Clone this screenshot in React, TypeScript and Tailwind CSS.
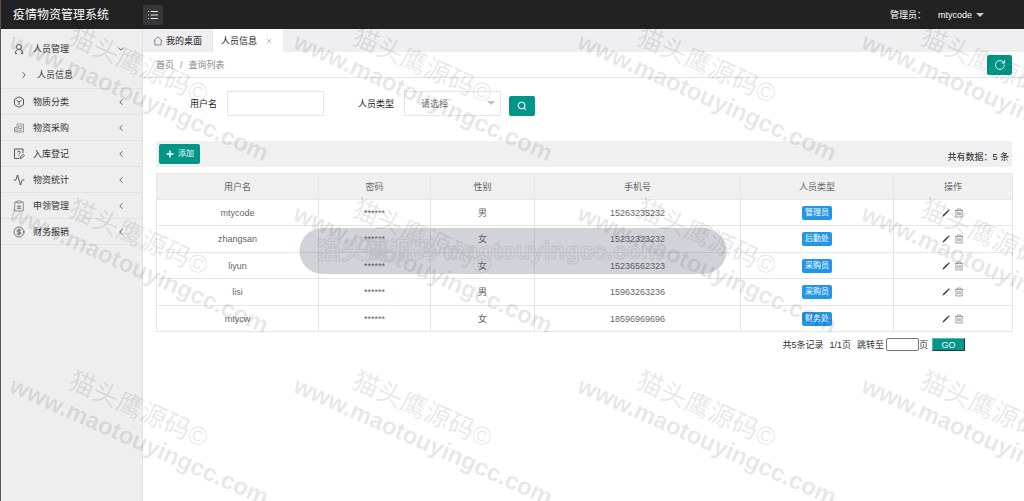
import { useState } from "react";
import type { ReactNode } from "react";
import {
  Activity,
  ChevronDown,
  ChevronLeft,
  ChevronRight,
  CircleDollarSign,
  List,
  Plus,
  RotateCw,
  Search,
  X,
} from "lucide-react";

type Person = {
  name: string;
  password: string;
  gender: string;
  phone: string;
  role: string;
};

const people: Person[] = [
  { name: "mtycode", password: "******", gender: "男", phone: "15263235232", role: "管理员" },
  { name: "zhangsan", password: "******", gender: "女", phone: "15232323232", role: "后勤处" },
  { name: "liyun", password: "******", gender: "女", phone: "15236562323", role: "采购员" },
  { name: "lisi", password: "******", gender: "男", phone: "15963263236", role: "采购员" },
  { name: "mtycw", password: "******", gender: "女", phone: "18596969696", role: "财务处" },
];

const columns = [
  { title: "用户名", width: "w-[162px]" },
  { title: "密码", width: "w-[112px]" },
  { title: "性别", width: "w-[104px]" },
  { title: "手机号", width: "w-[206px]" },
  { title: "人员类型", width: "w-[153px]" },
  { title: "操作", width: "w-[119px]" },
];

function Icon({ children }: { children: ReactNode }) {
  return (
    <svg
      viewBox="0 0 24 24"
      className="size-3"
      fill="none"
      stroke="currentColor"
      strokeWidth="1.6"
      aria-hidden="true"
    >
      {children}
    </svg>
  );
}

function UserIcon() {
  return (
    <Icon>
      <circle cx="12" cy="8" r="5" />
      <path d="M9.500 12.500C6.500 14 5 17 4.500 21H8M14.500 12.500c3 1.500 4.500 4.500 5 8.500H16" />
    </Icon>
  );
}

function BoxIcon() {
  return (
    <Icon>
      <path d="M12 1.500l9 5v11l-9 5-9-5v-11z" />
      <path d="M7 8.500l5 3.500 5-3.500M12 12v6" />
    </Icon>
  );
}

function PurchaseIcon() {
  return (
    <Icon>
      <path d="M8 4h13v16H3v-9h5z" stroke="#888" />
      <path d="M8 11v9M11 8h7v5h-7zM11 16.500h7M5.500 14v4" stroke="#888" />
    </Icon>
  );
}

function RegisterIcon() {
  return (
    <Icon>
      <path d="M20 10V2H3v19h9" />
      <path d="M9 8.500c0-3.500 5.500-3 5.500 0 0 2-2.800 2-2.800 4.500M11.700 15v1.500M14 21l1-3.500 5-5 2.500 2.500-5 5z" />
    </Icon>
  );
}

function ApplyIcon() {
  return (
    <Icon>
      <path d="M8 4H3.500v18h17V4H16" stroke="#777" />
      <path d="M8 2h8v4H8zM9 10l3 3 3-3M7.500 13.500h9M7.500 17h9M12 13v6" stroke="#777" />
    </Icon>
  );
}

function PencilIcon() {
  return (
    <svg viewBox="0 0 16 16" className="size-2" fill="#333" aria-hidden="true">
      <path d="M13.500 0.500l2 2-1.800 1.800-2-2zM11 3l2 2L4.500 13.500 0.500 15.500 2.500 11.500z" />
    </svg>
  );
}

function TrashIcon() {
  return (
    <Icon>
      <path
        d="M2 6h20M7.500 6V2.500h9V6M4.500 6v15.500h15V6M9 10v7.500M12 10v7.500M15 10v7.500"
        stroke="#777"
      />
    </Icon>
  );
}

function HomeIcon() {
  return (
    <Icon>
      <path d="M1.500 12L12 2l10.500 10M4.500 10v11.500h15V10" stroke="#555" />
    </Icon>
  );
}

const menu = [
  { label: "物质分类", icon: <BoxIcon /> },
  { label: "物资采购", icon: <PurchaseIcon /> },
  { label: "入库登记", icon: <RegisterIcon /> },
  { label: "物资统计", icon: <Activity className="size-3" strokeWidth={1.6} /> },
  { label: "申领管理", icon: <ApplyIcon /> },
  { label: "财务报销", icon: <CircleDollarSign className="size-3" strokeWidth={1.3} /> },
];

function Header() {
  return (
    <header className="flex h-[29px] shrink-0 items-center bg-[#222] text-white">
      <h1 className="w-[142px] pl-3 text-[12px] leading-4">疫情物资管理系统</h1>
      <button
        aria-label="菜单"
        className="flex size-5 items-center justify-center rounded-xs bg-[#383838] text-gray-200"
      >
        <List className="size-3" strokeWidth={2} />
      </button>
      <div className="ml-auto flex items-center pr-10">
        <span>管理员：</span>
        <button className="ml-3 flex items-center gap-1">
          mtycode
          <svg viewBox="0 0 8 4" className="h-1 w-2" fill="#ccc" aria-hidden="true">
            <path d="M0 0h8L4 4z" />
          </svg>
        </button>
      </div>
    </header>
  );
}

function Sidebar() {
  return (
    <nav className="w-[142px] shrink-0 border-r border-[#e2e2e2] bg-[#eee] pt-[7px] text-[#333]">
      <a href="#people" className="flex h-[26px] items-center pr-4 pl-3">
        <UserIcon />
        <span className="ml-2">人员管理</span>
        <ChevronDown className="ml-auto size-2.5" strokeWidth={1.8} />
      </a>
      <a
        href="#people-info"
        className="flex h-[27px] items-center border-b border-[#e2e2e2] pl-[18px]"
      >
        <ChevronRight className="size-2.5" strokeWidth={1.8} />
        <span className="ml-2">人员信息</span>
      </a>
      {menu.map((item) => (
        <a
          key={item.label}
          href="#menu"
          className="flex h-[26px] items-center border-b border-[#e2e2e2] pr-4 pl-3"
        >
          {item.icon}
          <span className="ml-2">{item.label}</span>
          <ChevronLeft className="ml-auto size-2.5" strokeWidth={1.8} />
        </a>
      ))}
    </nav>
  );
}

function Tabs() {
  return (
    <div className="flex h-[23px] bg-[#efeef0] text-[#222]">
      <button className="flex items-center gap-[3px] border-r border-[#e2e2e2] px-2.5 [&>svg]:size-2.5">
        <HomeIcon />
        我的桌面
      </button>
      <button className="flex items-center gap-2 bg-white pr-2.5 pl-2">
        人员信息
        <X className="size-2 text-gray-400" strokeWidth={2} />
      </button>
    </div>
  );
}

function SearchForm() {
  const [name, setName] = useState("");

  return (
    <form
      className="flex items-center pt-[13px] pl-[34px] text-[#222]"
      onSubmit={(e) => e.preventDefault()}
    >
      <label htmlFor="username">用户名</label>
      <input
        id="username"
        value={name}
        onChange={(e) => setName(e.target.value)}
        className="ml-2.5 h-[25px] w-[97px] border border-[#e6e6e6] bg-white px-2"
      />
      <label htmlFor="role" className="ml-[34px]">
        人员类型
      </label>
      <div className="relative ml-2.5">
        <select
          id="role"
          className="block h-[25px] w-[97px] appearance-none border border-[#e6e6e6] bg-white pl-4 text-[#757575]"
        >
          <option>请选择</option>
          <option>管理员</option>
          <option>后勤处</option>
          <option>采购员</option>
          <option>财务处</option>
        </select>
        <svg
          viewBox="0 0 8 4"
          className="pointer-events-none absolute top-2.5 right-1.5 h-1 w-2"
          fill="#c2c2c2"
          aria-hidden="true"
        >
          <path d="M0 0h8L4 4z" />
        </svg>
      </div>
      <button
        aria-label="搜索"
        className="ml-2 flex h-5 w-[26px] items-center justify-center self-end rounded-xs bg-[#009688] text-white"
      >
        <Search className="size-2.5" strokeWidth={2.5} />
      </button>
    </form>
  );
}

function PeopleTable() {
  return (
    <table className="mt-1.5 w-full table-fixed border-collapse text-center text-[#666]">
      <thead>
        <tr className="h-[26px] bg-[#f0f0f0]">
          {columns.map((col) => (
            <th
              key={col.title}
              className={`border border-[#e6e6e6] p-0 font-normal ${col.width}`}
            >
              {col.title}
            </th>
          ))}
        </tr>
      </thead>
      <tbody>
        {people.map((p) => (
          <tr key={p.name} className="h-[26px] *:border *:border-[#e6e6e6] *:p-0 even:h-[27px]">
            <td>{p.name}</td>
            <td>{p.password}</td>
            <td>{p.gender}</td>
            <td>{p.phone}</td>
            <td>
              <span className="inline-block rounded-xs bg-[#2496ea] px-[3px] text-[8px] leading-[14px] text-white">
                {p.role}
              </span>
            </td>
            <td>
              <div className="flex items-center justify-center gap-1">
                <button aria-label="编辑">
                  <PencilIcon />
                </button>
                <button aria-label="删除" className="[&>svg]:size-2.5">
                  <TrashIcon />
                </button>
              </div>
            </td>
          </tr>
        ))}
      </tbody>
    </table>
  );
}

function Pagination() {
  return (
    <div className="mt-1.5 flex items-center justify-end pr-[47px] text-[#333]">
      <span>共5条记录</span>
      <span className="ml-1.5">1/1页</span>
      <label htmlFor="page" className="ml-1.5">
        跳转至
      </label>
      <input
        id="page"
        className="ml-0.5 h-[13px] w-[33px] rounded-xs border border-[#767676] bg-white px-1"
      />
      <span>页</span>
      <button className="ml-1 h-[13px] w-[33px] border border-t-[#5cb8ae] border-r-[#333] border-b-[#333] border-l-[#5cb8ae] bg-[#009688] leading-[10px] text-white">
        GO
      </button>
    </div>
  );
}

// Repeating diagonal mark plus the rounded banner, laid over the whole page
function Watermark() {
  return (
    <div
      aria-hidden="true"
      className="pointer-events-none absolute inset-0 overflow-hidden select-none"
    >
      <div className="ml-7 grid auto-rows-[172px] grid-cols-[repeat(4,284px)] text-black/10">
        {Array.from({ length: 12 }, (_, i) => (
          <div key={i} className="w-max origin-top-left rotate-24 whitespace-nowrap">
            <div className="pl-[52px] text-[26px] leading-[30px]">猫头鹰源码©</div>
            <div className="text-[24px] leading-7 font-bold">www.maotouyingcc.com</div>
          </div>
        ))}
      </div>
      <div className="absolute top-[228px] left-1/2 w-[427px] -translate-x-1/2 rounded-full bg-[#4b5064]/25 pl-[18px] text-[24px] leading-[46px] font-bold whitespace-nowrap text-transparent [-webkit-text-stroke:1px_#c0c1c8]">
        猫头鹰源码 maotouyingcc.com
      </div>
    </div>
  );
}

export default function App() {
  return (
    <div className="relative flex min-h-screen flex-col border-l border-[#555] bg-white font-['Liberation_Sans','Noto_Sans_CJK_SC',sans-serif] text-[9px] leading-3">
      <Header />
      <div className="flex flex-1">
        <Sidebar />
        <main className="min-w-0 flex-1">
          <Tabs />
          <div className="flex h-[26px] items-center border-b border-[#e5e5e5] pr-3 pl-[13px] text-[#888]">
            <a href="#home">首页</a>
            <span className="mx-1.5">/</span>
            <a href="#list">查询列表</a>
            <button
              aria-label="刷新"
              className="ml-auto flex h-5 w-[25px] items-center justify-center rounded-xs bg-[#009688] text-white"
            >
              <RotateCw className="size-3" strokeWidth={1.8} />
            </button>
          </div>
          <div className="pr-3 pl-[13px]">
            <SearchForm />
            <div className="mt-[25px] flex h-[26px] items-center bg-[#f0f0f0] pr-[3px] pl-[3px]">
              <button className="flex h-5 items-center gap-[3px] rounded-xs bg-[#009688] px-1.5 text-[8px] text-white">
                <Plus className="size-2.5" strokeWidth={3.5} />
                添加
              </button>
              <span className="ml-auto self-end pb-1 text-[#222]">共有数据：5 条</span>
            </div>
            <PeopleTable />
            <Pagination />
          </div>
        </main>
      </div>
      <Watermark />
    </div>
  );
}
